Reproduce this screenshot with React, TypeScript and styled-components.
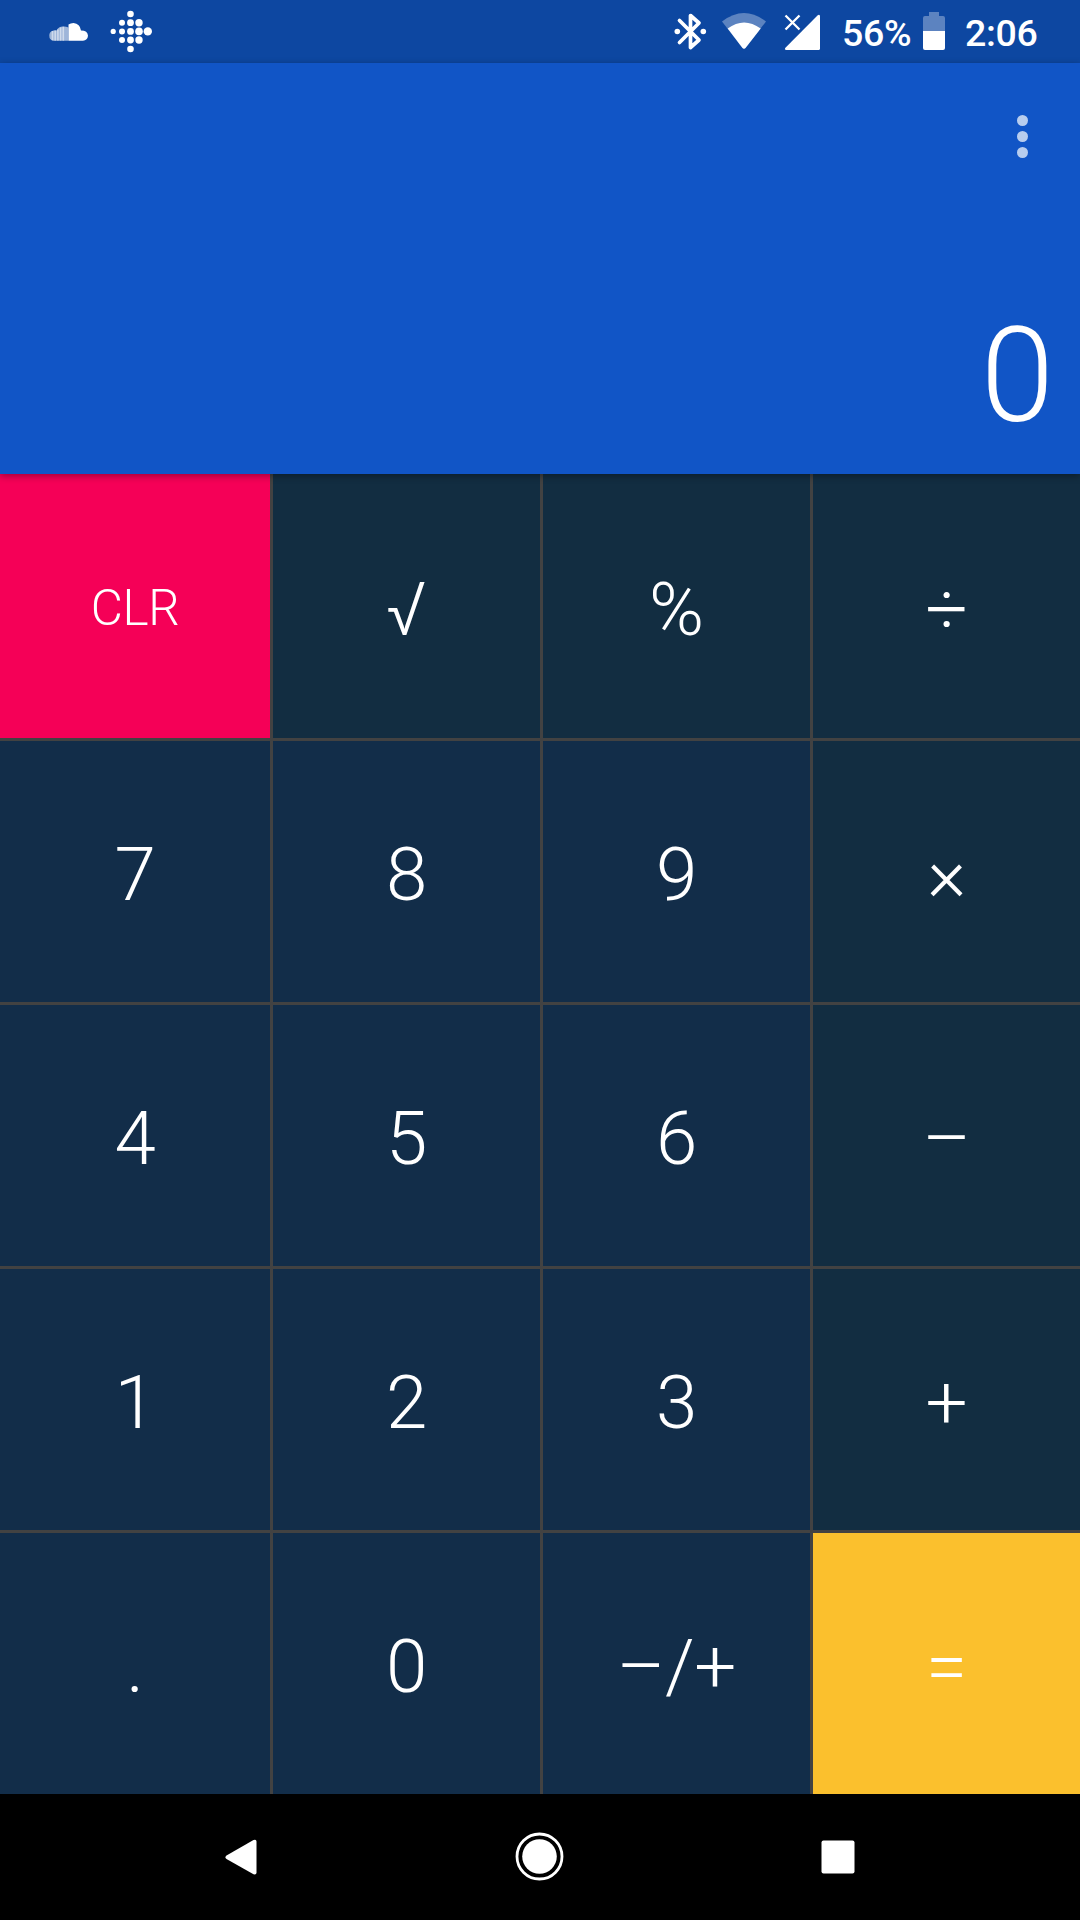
import React from "react";
import styled, { createGlobalStyle } from "styled-components";

const Global = createGlobalStyle`
  body { margin: 0; background: #000; }
  * { box-sizing: border-box; }
`;

const Screen = styled.div`
  width: 1080px;
  height: 1920px;
  display: flex;
  flex-direction: column;
  overflow: hidden;
  font-family: Roboto, "Noto Sans", sans-serif;
  color: #fff;
`;

const StatusBar = styled.header`
  height: 63px;
  flex: none;
  display: flex;
  justify-content: space-between;
  background: #0d47a1;
`;

const StatusGroup = styled.div<{ $left?: number; $right?: number }>`
  display: flex;
  align-items: flex-start;
  padding-left: ${(p) => p.$left ?? 0}px;
  padding-right: ${(p) => p.$right ?? 0}px;
`;

const StatusIcon = styled.svg<{ $gap?: number }>`
  display: block;
  flex: none;
  margin-right: ${(p) => p.$gap ?? 0}px;
`;

const StatusText = styled.span<{ $width: number }>`
  width: ${(p) => p.$width}px;
  font-size: 37.5px;
  font-weight: 500;
  line-height: 67px;
  letter-spacing: -0.3px;
  white-space: nowrap;
`;

const Display = styled.section`
  position: relative;
  z-index: 1;
  height: 411px;
  flex: none;
  display: flex;
  flex-direction: column;
  justify-content: space-between;
  align-items: flex-end;
  background: #1155c6;
  box-shadow: 0 2px 7px rgba(0, 0, 0, 0.36);
`;

const MenuButton = styled.button`
  display: flex;
  flex-direction: column;
  gap: 5px;
  margin: 52px 52px 0 0;
  padding: 0;
  border: 0;
  background: none;
`;

const MenuDot = styled.span`
  width: 11px;
  height: 11px;
  border-radius: 50%;
  background: #b8cdee;
`;

const Result = styled.output`
  padding: 0 26px 20px 0;
  font-size: 132px;
  font-weight: 300;
  line-height: 155px;
`;

const Keypad = styled.main`
  flex: none;
  height: 1320px;
  display: grid;
  grid-template-columns: repeat(4, 270px);
  grid-template-rows: repeat(5, 264px);
`;

const keyColors = {
  digit: "#122d49",
  operator: "#122d41",
  clear: "#f50057",
  equals: "#fbc02d",
};
type Kind = keyof typeof keyColors;

const Key = styled.button<{ $kind: Kind; $top: boolean; $left: boolean }>`
  display: flex;
  align-items: center;
  justify-content: center;
  padding: ${(p) => (p.$kind === "clear" ? 4 : 7)}px 0 0;
  border: 0 solid #424242;
  border-top-width: ${(p) => (p.$top ? 3 : 0)}px;
  border-left-width: ${(p) => (p.$left ? 3 : 0)}px;
  background: ${(p) => keyColors[p.$kind]};
  color: #fff;
  font-family: inherit;
  font-size: ${(p) => (p.$kind === "clear" ? 49.5 : 74.5)}px;
  font-weight: 300;
  line-height: 88px;
  letter-spacing: ${(p) => (p.$kind === "clear" ? -0.4 : -0.3)}px;
`;

const NavBar = styled.nav`
  flex: 1;
  display: flex;
  align-items: center;
  justify-content: space-between;
  padding: 0 216px;
  background: #000;
`;

const keys: [string, Kind][] = [
  ["CLR", "clear"], ["√", "operator"], ["%", "operator"], ["÷", "operator"],
  ["7", "digit"], ["8", "digit"], ["9", "digit"], ["×", "operator"],
  ["4", "digit"], ["5", "digit"], ["6", "digit"], ["–", "operator"],
  ["1", "digit"], ["2", "digit"], ["3", "digit"], ["+", "operator"],
  [".", "digit"], ["0", "digit"], ["–/+", "digit"], ["=", "equals"],
];

const fitbitDots: [number, number, number][] = [
  [83.2, 31.4, 2.6],
  [92, 22.7, 3], [92, 31.4, 3], [92, 40, 3],
  [100.5, 14, 3.3], [100.5, 22.7, 3.4], [100.5, 31.4, 3.4], [100.5, 40, 3.4], [100.5, 49, 3.3],
  [109, 22.7, 3.7], [109, 31.4, 3.8], [109, 40, 3.7],
  [117.8, 31.4, 4.2],
];

export default function App() {
  return (
    <>
      <Global />
      <Screen>
        <StatusBar>
          <StatusGroup $left={30}>
            <StatusIcon width="140" height="63" viewBox="0 0 140 63" fill="#fff">
              <path d="M38.500 40.700V24.500Q40.500 23 43.500 23Q50 23.500 51 30.500Q57.700 30.500 58 35.800Q57.500 40.500 53 40.700Z" />
              <path opacity="0.6" d="M19.300 35.500Q19.300 32 22 31Q24.500 30 26.500 30.500Q28.500 26.500 33 26.500Q36 26.300 38.500 27.500V40.700H23Q19.300 40 19.300 35.500Z" />
              <g opacity="0.5">
                <rect x="21.700" y="31" width="1.600" height="9.300" />
                <rect x="24.400" y="30.500" width="1.600" height="10.200" />
                <rect x="27.100" y="29.500" width="1.600" height="11.200" />
                <rect x="29.800" y="27.500" width="1.600" height="13.200" />
                <rect x="32.500" y="26.700" width="1.600" height="14" />
              </g>
              {fitbitDots.map(([x, y, r]) => (
                <circle key={`${x}-${y}`} cx={x} cy={y} r={r} />
              ))}
            </StatusIcon>
          </StatusGroup>
          <StatusGroup $right={42}>
            <StatusIcon width="172" height="63" viewBox="670 0 172 63">
              <path d="M679.500 20.500L699 40L690.500 47.500V15.500L699 23L679.500 42.500" fill="none" stroke="#fff" strokeWidth="3.700" strokeLinecap="round" strokeLinejoin="round" />
              <circle cx="677.300" cy="31.500" r="2.800" fill="#fff" />
              <circle cx="703.300" cy="31.500" r="2.800" fill="#fff" />
              <path d="M722 21.500Q744 4.500 766 21.500L745.500 48Q744 49.500 742.500 48Z" fill="#fff" opacity="0.33" />
              <path d="M727.700 28.500Q744 16.500 760.700 28.500L745.500 48Q744 49.500 742.500 48Z" fill="#fff" />
              <path d="M820 16V48.500Q820 50 818.500 50H786Q784 49.500 785.200 48L817.500 15.500Q819.500 14 820 16Z" fill="#fff" />
              <path d="M785.500 15.500L799.500 29.500M799.500 15.500L785.500 29.500" fill="none" stroke="#fff" strokeWidth="2.300" />
            </StatusIcon>
            <StatusText $width={81}>56%</StatusText>
            <StatusIcon width="22" height="63" viewBox="0 0 22 63" fill="#fff" $gap={20}>
              <path opacity="0.33" d="M6 12H16V16H20Q22 16 22 18V31H0V18Q0 16 2 16H6Z" />
              <path d="M0 31H22V48Q22 50 20 50H2Q0 50 0 48Z" />
            </StatusIcon>
            <StatusText $width={73}>2:06</StatusText>
          </StatusGroup>
        </StatusBar>
        <Display>
          <MenuButton aria-label="More options">
            <MenuDot />
            <MenuDot />
            <MenuDot />
          </MenuButton>
          <Result>0</Result>
        </Display>
        <Keypad>
          {keys.map(([label, kind], i) => (
            <Key key={label} $kind={kind} $top={i > 3} $left={i % 4 !== 0}>
              {label}
            </Key>
          ))}
        </Keypad>
        <NavBar>
          <svg width="50" height="50" viewBox="216 1832 50 50">
            <path d="M226.500 1855.500Q224.500 1857 226.500 1859L253.500 1874.300Q256.500 1875 256.500 1872.500V1841.500Q256.500 1839 253.500 1840Z" fill="#fff" />
          </svg>
          <svg width="50" height="50" viewBox="0 0 50 50">
            <circle cx="24.500" cy="24.500" r="22.500" fill="none" stroke="#fff" strokeWidth="2.800" />
            <circle cx="24.500" cy="24.500" r="17.300" fill="#fff" />
          </svg>
          <svg width="50" height="50" viewBox="814 1832 50 50">
            <rect x="821.500" y="1840.500" width="33" height="33" rx="2" fill="#fff" />
          </svg>
        </NavBar>
      </Screen>
    </>
  );
}
